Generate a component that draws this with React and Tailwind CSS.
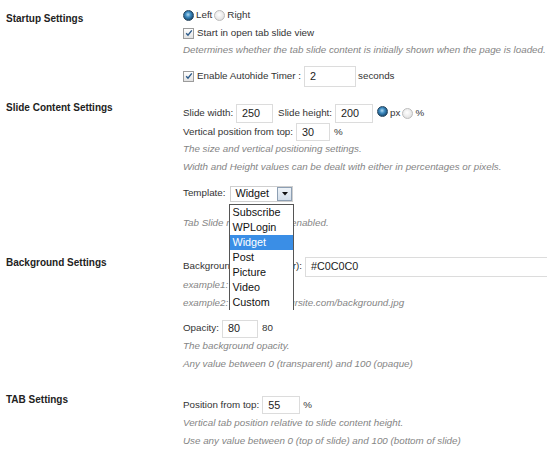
import React from "react";

function Radio({ checked }) {
  return checked ? (
    <span className="inline-block w-[11px] h-[11px] rounded-full border border-[#27465f] bg-[radial-gradient(circle_at_45%_40%,#b5dcf2_0%,#3f8cc2_35%,#1d557f_70%,#163a57_100%)] shrink-0" />
  ) : (
    <span className="inline-block w-[11px] h-[11px] rounded-full border border-[#bcbcbc] bg-[radial-gradient(circle_at_45%_40%,#ffffff_0%,#e8e8e8_60%,#d2d2d2_100%)] shrink-0" />
  );
}

function Checkbox() {
  return (
    <span className="inline-flex items-center justify-center w-[11px] h-[11px] border border-[#9c9c9c] bg-[linear-gradient(#ffffff,#e2e2e2)] shrink-0">
      <svg width="8" height="8" viewBox="0 0 8 8">
        <path d="M1.2 4.2 L3 6.2 L6.8 1.4" fill="none" stroke="#2b5a8a" strokeWidth="1.4" />
      </svg>
    </span>
  );
}

function Field({ value, w, h = "h-[19px]" }) {
  return (
    <span className={`inline-flex items-center ${w} ${h} border border-[#dcdcdc] bg-white px-[5px] text-[10.8px] text-[#222] shrink-0`}>
      {value}
    </span>
  );
}

function Note({ children, h = "h-[18px]" }) {
  return <div className={`${h} flex items-center italic text-[#858585]`}>{children}</div>;
}

function Section({ label, labelMt, children, className = "" }) {
  return (
    <div className={`flex ${className}`}>
      <div className={`w-[183px] shrink-0 pl-[6px] ${labelMt} leading-[12px] text-[10px] font-bold text-[#222]`}>
        {label}
      </div>
      <div className="flex-1 min-w-0">{children}</div>
    </div>
  );
}

const templates = ["Subscribe", "WPLogin", "Widget", "Post", "Picture", "Video", "Custom"];

export default function App() {
  return (
    <div className="w-[547px] h-[456px] overflow-hidden bg-white font-['Liberation_Sans',Arial,sans-serif] text-[9.8px] text-[#333] whitespace-nowrap">
      <Section label="Startup Settings" labelMt="mt-[7px]" className="pt-[6px]">
        <div className="h-[18px] flex items-center">
          <Radio checked />
          <span className="ml-[2px] mr-[2px]">Left</span>
          <Radio />
          <span className="ml-[2px]">Right</span>
        </div>
        <div className="h-[18px] flex items-center">
          <Checkbox />
          <span className="ml-[3px]">Start in open tab slide view</span>
        </div>
        <Note h="h-[17px]">Determines whether the tab slide content is initially shown when the page is loaded.</Note>
        <div className="mt-[6px] h-[22px] flex items-center">
          <Checkbox />
          <span className="ml-[3px] mr-[3px]">Enable Autohide Timer :</span>
          <Field value="2" w="w-[52px]" h="h-[21px]" />
          <span className="ml-[2px]">seconds</span>
        </div>
      </Section>

      <Section label="Slide Content Settings" labelMt="mt-[5px]" className="mt-[10px]">
        <div className="pt-[7px]">
          <div className="h-[19px] flex items-center">
            <span className="mr-[3px]">Slide width:</span>
            <Field value="250" w="w-[37px]" />
            <span className="ml-[5px] mr-[3px]">Slide height:</span>
            <Field value="200" w="w-[38px]" />
            <span className="ml-[4px]"><Radio checked /></span>
            <span className="ml-[2px] mr-[2px]">px</span>
            <Radio />
            <span className="ml-[2px]">%</span>
          </div>
          <div className="h-[18px] flex items-center">
            <span className="mr-[3px]">Vertical position from top:</span>
            <Field value="30" w="w-[34px]" h="h-[18px]" />
            <span className="ml-[4px]">%</span>
          </div>
          <Note h="h-[17px]">The size and vertical positioning settings.</Note>
          <Note>Width and Height values can be dealt with either in percentages or pixels.</Note>
          <div className="mt-[9px] h-[17px] flex items-center">
            <span className="mr-[5px]">Template:</span>
            <div className="relative flex items-center w-[63px] h-[16px] border border-[#cfcfcf] bg-white">
              <span className="pl-[4px] text-[10.8px] text-[#111] flex-1">Widget</span>
              <span className="flex items-center justify-center w-[15px] h-[14px] border border-[#8d9fb3] bg-[linear-gradient(#eef3f8,#d3deea)]">
                <svg width="6" height="4" viewBox="0 0 6 4">
                  <path d="M0 0 H6 L3 3.5 Z" fill="#111" />
                </svg>
              </span>
              <div className="absolute left-[-2px] top-[17px] w-[65px] border-t border-l border-r border-[#555] bg-white z-10">
                {templates.map((t) => (
                  <div
                    key={t}
                    className={`h-[15px] flex items-center pl-[2px] text-[10.8px] ${t === "Widget" ? "bg-[#3a8ee6] text-white" : "text-[#111]"}`}
                  >
                    {t}
                  </div>
                ))}
              </div>
            </div>
          </div>
          <Note h="h-[18px] mt-[12px]">Tab Slide mode must be enabled.</Note>
        </div>
      </Section>

      <Section label="Background Settings" labelMt="mt-[8px]" className="mt-[17px]">
        <div className="pt-[8px]">
          <div className="h-[19px] flex items-center">
            <span className="mr-[3px]">Background (URL or color):</span>
            <Field value="#C0C0C0" w="w-[260px]" h="h-[20px]" />
          </div>
          <Note>example1: #C0C0C0</Note>
          <Note>example2: http://www.yoursite.com/background.jpg</Note>
          <div className="mt-[7px] h-[19px] flex items-center">
            <span className="mr-[3px]">Opacity:</span>
            <Field value="80" w="w-[36px]" h="h-[18px]" />
            <span className="ml-[4px]">80</span>
          </div>
          <Note h="h-[17px]">The background opacity.</Note>
          <Note>Any value between 0 (transparent) and 100 (opaque)</Note>
        </div>
      </Section>

      <Section label="TAB Settings" labelMt="mt-[7px]" className="mt-[14px]">
        <div className="pt-[9px]">
          <div className="h-[18px] flex items-center">
            <span className="mr-[3px]">Position from top:</span>
            <Field value="55" w="w-[38px]" h="h-[18px]" />
            <span className="ml-[3px]">%</span>
          </div>
          <Note>Vertical tab position relative to slide content height.</Note>
          <Note>Use any value between 0 (top of slide) and 100 (bottom of slide)</Note>
        </div>
      </Section>
    </div>
  );
}
